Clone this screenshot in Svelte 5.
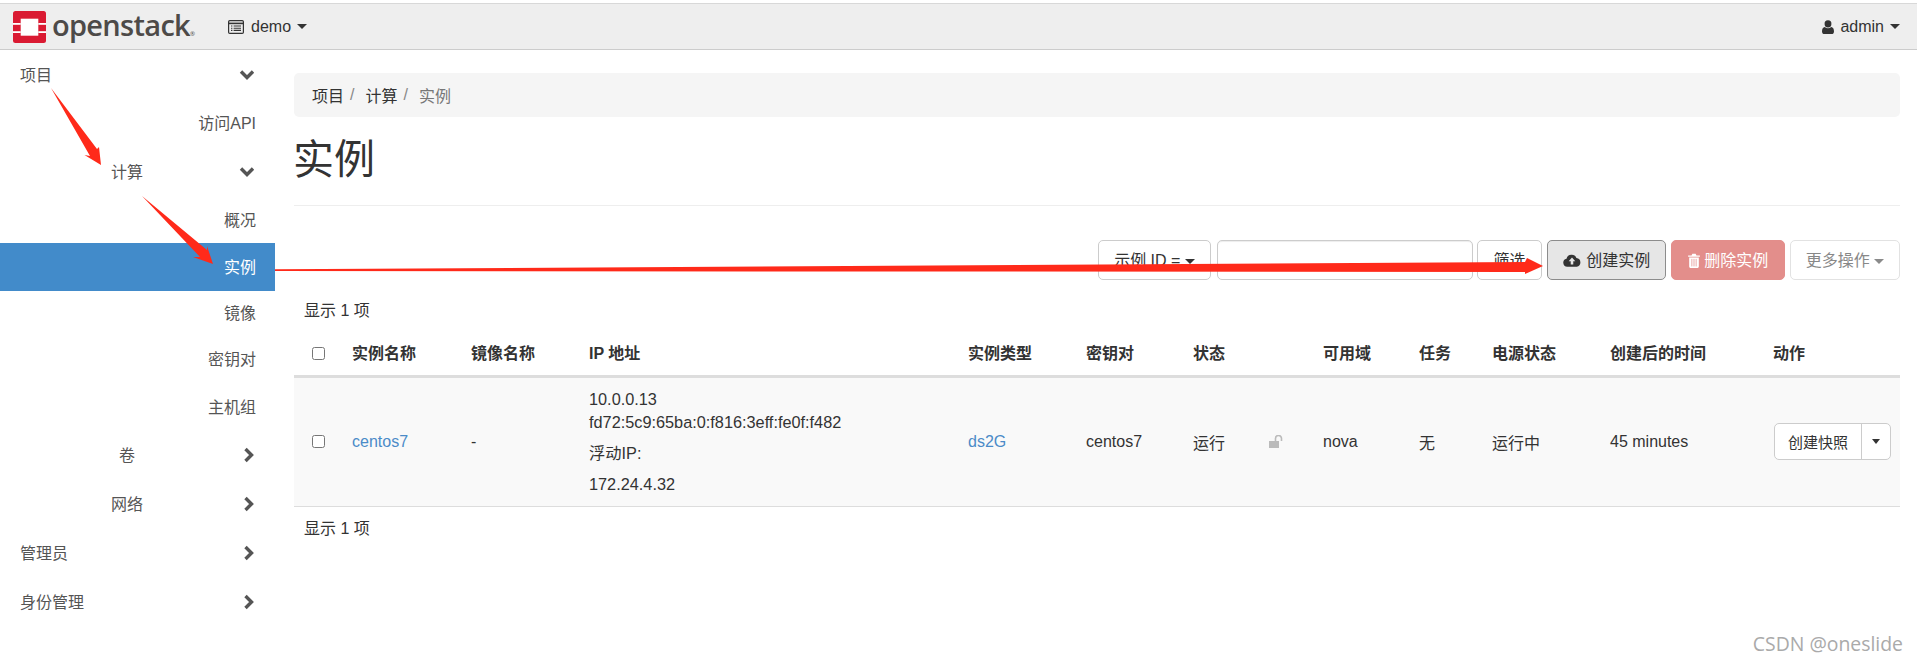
<script>
  const leaf = (label, extra = '') => ({ label, kind: 'leaf', extra });
  const nav = [
    { label: '项目', kind: 'top', dir: 'down' },
    { label: '访问API', kind: 'leaf', extra: 'tall' },
    { label: '计算', kind: 'sub', dir: 'down' },
    leaf('概况'),
    { label: '实例', kind: 'leaf', extra: 'active' },
    leaf('镜像', 'short'),
    { label: '密钥对', kind: 'leaf', extra: 'tall' },
    leaf('主机组'),
    { label: '卷', kind: 'sub', dir: 'right' },
    { label: '网络', kind: 'sub', dir: 'right' },
    { label: '管理员', kind: 'top', dir: 'right' },
    { label: '身份管理', kind: 'top', dir: 'right' }
  ];
  const heads = ['实例名称', '镜像名称', 'IP 地址', '实例类型', '密钥对', '状态', '', '可用域', '任务', '电源状态', '创建后的时间', '动作'];
</script>

{#snippet caret(cls = '')}
  <span class="caret {cls}"></span>
{/snippet}

<div class="page">
  <header class="topbar">
    <div class="brand">
      <svg class="logo" viewBox="0 0 33 32" aria-hidden="true">
        <rect width="33" height="32" rx="2.5" fill="#da1a32" />
        <rect x="7.7" y="7.7" width="17.6" height="17" fill="#fff" />
        <rect x="0" y="12" width="7.7" height="1.8" fill="#fff" />
        <rect x="0" y="20.2" width="7.7" height="1.8" fill="#fff" />
        <rect x="25.3" y="12" width="7.7" height="1.8" fill="#fff" />
        <rect x="25.3" y="20.2" width="7.7" height="1.8" fill="#fff" />
      </svg>
      <span class="wordmark">openstack<small>®</small></span>
    </div>
    <div class="project">
      <svg class="listicon" viewBox="0 0 16 14" aria-hidden="true">
        <rect x="0.6" y="0.6" width="14.8" height="12.8" rx="1.2" fill="none" stroke="#333" stroke-width="1.2" />
        <path d="M0.6 3.4h14.8" stroke="#333" stroke-width="1.6" />
        <path d="M3 6h1.4M3 8.2h1.4M3 10.4h1.4M5.6 6h7.4M5.6 8.2h7.4M5.6 10.4h7.4" stroke="#333" stroke-width="1.1" />
      </svg>
      <span>demo</span>
      {@render caret()}
    </div>
    <div class="user">
      <svg class="usericon" viewBox="0 0 12 14" aria-hidden="true">
        <path d="M6 0.2a3.4 3.4 0 0 1 3.4 3.6A3.4 3.4 0 0 1 6 7.4a3.4 3.4 0 0 1-3.4-3.6A3.4 3.4 0 0 1 6 .2z" fill="#333" />
        <path d="M2.8 7c.9.8 2 1.2 3.2 1.2S8.300 7.800 9.200 7C11 7.200 12 8.800 12 11.400 12 13 11 14 9.700 14H2.300C1 14 0 13 0 11.400 0 8.800 1 7.200 2.800 7z" fill="#333" />
      </svg>
      <span>admin</span>
      {@render caret()}
    </div>
  </header>

  <div class="body">
    <nav class="sidebar">
      {#each nav as item}
        <div class="row {item.kind} {item.extra ?? ''}">
          <span class="label">{item.label}</span>
          {#if item.dir === 'down'}
            <svg class="chev" viewBox="0 0 16 11" aria-hidden="true"><path d="M2 2l6 6 6-6" fill="none" stroke="#555" stroke-width="3.400" /></svg>
          {:else if item.dir === 'right'}
            <svg class="chev side" viewBox="0 0 11 16" aria-hidden="true"><path d="M2.500 2l6 6-6 6" fill="none" stroke="#555" stroke-width="3.400" /></svg>
          {/if}
        </div>
      {/each}
    </nav>

    <main class="main">
      <ol class="crumbs">
        <li>项目</li>
        <li class="sep">/</li>
        <li>计算</li>
        <li class="sep">/</li>
        <li class="current">实例</li>
      </ol>

      <div class="pagehead"><h1>实例</h1></div>

      <div class="toolbar">
        <button class="btn selectbtn">示例 ID = {@render caret('dark')}</button>
        <input class="search" type="text" />
        <button class="btn filter">筛选</button>
        <button class="btn create">
          <svg class="cloud" viewBox="0 0 17 12" aria-hidden="true">
            <path d="M4 12A3.900 3.900 0 0 1 3.300 4.300 5 5 0 0 1 12.700 3.700 4.200 4.200 0 0 1 13 12z" fill="#333" />
            <path d="M8.500 3.200L5.400 6.600H7.300V9.800H9.700V6.600H11.600z" fill="#e6e6e6" />
          </svg>
          创建实例
        </button>
        <button class="btn danger">
          <svg class="trash" viewBox="0 0 11 14" aria-hidden="true">
            <path d="M0 2.300h3.200L4 .6h3l.8 1.700H11v1.200H0z" fill="#fff" />
            <path d="M1 4.200h9v8.400c0 .8-.6 1.400-1.300 1.400H2.300C1.600 14 1 13.400 1 12.600z" fill="#fff" />
            <path d="M3.500 5.500v7M5.500 5.500v7M7.500 5.500v7" stroke="#e38e8b" stroke-width=".7" />
          </svg>
          删除实例
        </button>
        <button class="btn more">更多操作 {@render caret('muted')}</button>
      </div>

      <table>
        <colgroup>
          <col class="c-check" /><col class="c-name" /><col class="c-image" /><col class="c-ip" />
          <col class="c-type" /><col class="c-key" /><col class="c-state" /><col class="c-lock" />
          <col class="c-zone" /><col class="c-task" /><col class="c-power" /><col class="c-age" /><col class="c-act" />
        </colgroup>
        <thead>
          <tr class="count"><td colspan="13">显示 1 项</td></tr>
          <tr class="heads">
            <th class="check"><input type="checkbox" /></th>
            {#each heads as h}<th>{h}</th>{/each}
          </tr>
        </thead>
        <tbody>
          <tr class="instance">
            <td class="check"><input type="checkbox" /></td>
            <td><span class="link">centos7</span></td>
            <td>-</td>
            <td class="ips">
              <div>10.0.0.13</div>
              <div>fd72:5c9:65ba:0:f816:3eff:fe0f:f482</div>
              <div class="gap">浮动IP:</div>
              <div class="gap">172.24.4.32</div>
            </td>
            <td><span class="link">ds2G</span></td>
            <td>centos7</td>
            <td>运行</td>
            <td>
              <svg class="lock" viewBox="0 0 15 13" aria-hidden="true">
                <rect x="0" y="6" width="10" height="7" fill="#bbb" />
                <path d="M6.500 6V3.500a3 3 0 0 1 6 0V6" fill="none" stroke="#bbb" stroke-width="1.600" />
              </svg>
            </td>
            <td>nova</td>
            <td>无</td>
            <td>运行中</td>
            <td>45 minutes</td>
            <td>
              <div class="split">
                <span class="snap">创建快照</span>
                <span class="drop">{@render caret('dark small')}</span>
              </div>
            </td>
          </tr>
        </tbody>
        <tfoot>
          <tr class="count foot"><td colspan="13">显示 1 项</td></tr>
        </tfoot>
      </table>
    </main>
  </div>

  <svg class="arrows" viewBox="0 0 1917 662" aria-hidden="true">
    <polygon points="51,88 97,149 99,147 101,165 84.500,155 90,156" fill="#ff2a1a" />
    <polygon points="142,196 207,250 207,246 213,264 193,257 200,257" fill="#ff2a1a" />
    <polygon points="275,269.300 1525,262 1527,258 1543,266 1525,274 1525,272 275,271" fill="#ff2a1a" />
  </svg>

  <div class="watermark">CSDN @oneslide</div>
</div>

<style>
  :global(body) {
    margin: 0;
    background: #fff;
  }
  .page {
    position: relative;
    width: 1917px;
    height: 662px;
    overflow: hidden;
    font-family: "Liberation Sans", "Noto Sans CJK SC", sans-serif;
    font-size: 16px;
    color: #333;
  }
  .topbar {
    margin-top: 3px;
    height: 45px;
    display: flex;
    align-items: center;
    background: #eee;
    border-top: 1px solid #d8d8d8;
    border-bottom: 1px solid #ccc;
  }
  .brand {
    display: flex;
    align-items: center;
    margin-left: 13px;
    width: 215px;
  }
  .logo {
    width: 33px;
    height: 32px;
    flex: none;
  }
  .wordmark {
    margin-left: 6px;
    font-family: "Open Sans", sans-serif;
    font-size: 29px;
    font-weight: 600;
    color: #4d4a48;
    letter-spacing: -0.7px;
    line-height: 1;
    position: relative;
    top: -2px;
  }
  .wordmark small {
    font-size: 6px;
    font-weight: 400;
    letter-spacing: 0;
  }
  .project {
    display: flex;
    align-items: center;
    gap: 6px;
  }
  .listicon {
    width: 16px;
    height: 14px;
    margin-right: 1px;
  }
  .user {
    margin-left: auto;
    margin-right: 17px;
    display: flex;
    align-items: center;
    gap: 6px;
  }
  .usericon {
    width: 12px;
    height: 14px;
  }
  .caret {
    display: inline-block;
    width: 0;
    height: 0;
    border-left: 5px solid transparent;
    border-right: 5px solid transparent;
    border-top: 5px solid #333;
    vertical-align: middle;
  }
  .caret.muted {
    border-top-color: #8a8a8a;
  }
  .caret.small {
    border-left-width: 4px;
    border-right-width: 4px;
  }
  .body {
    display: flex;
  }
  .sidebar {
    width: 275px;
    flex: none;
    color: #555;
  }
  .row {
    display: flex;
    align-items: center;
    height: 49px;
    position: relative;
  }
  .label {
    margin-bottom: 2px;
  }
  .row.top {
    padding-left: 20px;
  }
  .row.sub .label {
    margin-left: 111px;
    width: 32px;
    text-align: center;
  }
  .row.leaf {
    height: 47px;
    justify-content: flex-end;
    padding-right: 19px;
  }
  .row.leaf.tall {
    height: 48px;
  }
  .row.leaf.short {
    height: 44px;
  }
  .row.leaf.active {
    height: 48px;
    background: #428bca;
    color: #fff;
  }
  .chev {
    position: absolute;
    right: 20px;
    top: 50%;
    transform: translateY(-50%);
    width: 16px;
    height: 11px;
  }
  .chev.side {
    right: 21px;
    width: 11px;
    height: 16px;
  }
  .main {
    width: 1606px;
    margin-left: 19px;
  }
  .crumbs {
    list-style: none;
    margin: 23px 0 0;
    padding: 0 18px;
    height: 44px;
    display: flex;
    align-items: center;
    gap: 6px;
    background: #f5f5f5;
    border-radius: 5px;
  }
  .crumbs .sep {
    color: #888;
    margin-right: 5px;
  }
  .crumbs .current {
    color: #777;
  }
  .pagehead {
    height: 88px;
    display: flex;
    align-items: center;
    border-bottom: 1px solid #eee;
  }
  h1 {
    margin: 0 0 0 -1px;
    font-size: 41px;
    font-weight: 400;
    line-height: 1.1;
    color: #333;
  }
  .toolbar {
    margin-top: 34px;
    height: 40px;
    display: flex;
    justify-content: flex-end;
  }
  .btn {
    font: inherit;
    color: #333;
    box-sizing: border-box;
    height: 40px;
    background: #fff;
    border: 1px solid #ccc;
    border-radius: 5px;
    padding: 0 0 3px;
    margin: 0;
    white-space: nowrap;
  }
  .selectbtn {
    width: 113px;
  }
  .search {
    box-sizing: border-box;
    width: 256px;
    height: 40px;
    margin: 0 4px 0 6px;
    background: #fff;
    border: 1px solid #ccc;
    border-radius: 5px;
    box-shadow: inset 0 1px 1px rgba(0, 0, 0, 0.075);
    outline: none;
  }
  .filter {
    width: 65px;
  }
  .create {
    width: 119px;
    margin-left: 5px;
    background: #e6e6e6;
    border-color: #8c8c8c;
  }
  .cloud {
    width: 18px;
    height: 13px;
    margin-right: 1px;
    vertical-align: -1px;
  }
  .danger {
    width: 114px;
    margin-left: 5px;
    background: #e38e8b;
    border-color: #e38e8b;
    color: #fff;
  }
  .trash {
    width: 12px;
    height: 15px;
    vertical-align: -2px;
  }
  .more {
    width: 110px;
    margin-left: 5px;
    color: #888;
    border-color: #e2e2e2;
  }
  table {
    width: 1606px;
    margin-top: 11px;
    border-collapse: collapse;
    table-layout: fixed;
  }
  .c-check { width: 48px; }
  .c-name { width: 119px; }
  .c-image { width: 118px; }
  .c-ip { width: 379px; }
  .c-type { width: 118px; }
  .c-key { width: 107px; }
  .c-state { width: 76px; }
  .c-lock { width: 54px; }
  .c-zone { width: 96px; }
  .c-task { width: 73px; }
  .c-power { width: 118px; }
  .c-age { width: 163px; }
  .c-act { width: 137px; }
  th, td {
    padding: 0 0 0 10px;
    text-align: left;
    vertical-align: middle;
  }
  input[type="checkbox"] {
    margin: 0;
    display: block;
    width: 13px;
    height: 13px;
  }
  .heads input[type="checkbox"] {
    margin-top: 3px;
  }
  .check {
    padding-left: 18px;
  }
  .count {
    height: 39px;
    font-size: 16px;
  }
  .count td {
    padding-left: 10px;
    vertical-align: bottom;
    padding-bottom: 9px;
  }
  .foot {
    height: 42px;
  }
  .foot td {
    vertical-align: middle;
    padding-bottom: 0;
  }
  .heads {
    height: 46px;
    border-bottom: 3px solid #ddd;
  }
  .heads th {
    font-weight: 700;
  }
  .instance {
    height: 130px;
    background: #f9f9f9;
    border-bottom: 1px solid #ddd;
  }
  .link {
    color: #4b8bc8;
  }
  .ips div {
    line-height: 23px;
    font-size: 16.3px;
  }
  .ips .gap {
    margin-top: 8px;
  }
  .lock {
    width: 15px;
    height: 13px;
    display: block;
  }
  .split {
    box-sizing: border-box;
    display: flex;
    width: 117px;
    height: 37px;
    margin-left: 1px;
    background: #fff;
    border: 1px solid #ccc;
    border-radius: 5px;
    font-size: 15px;
  }
  .snap {
    width: 86px;
    display: flex;
    align-items: center;
    justify-content: center;
    border-right: 1px solid #ccc;
  }
  .drop {
    flex: 1;
    display: flex;
    align-items: center;
    justify-content: center;
  }
  .arrows {
    position: absolute;
    inset: 0;
    width: 1917px;
    height: 662px;
    pointer-events: none;
  }
  .watermark {
    position: absolute;
    right: 14px;
    bottom: 5px;
    font-family: "Open Sans", sans-serif;
    font-size: 19.4px;
    color: #aaa;
  }
</style>
